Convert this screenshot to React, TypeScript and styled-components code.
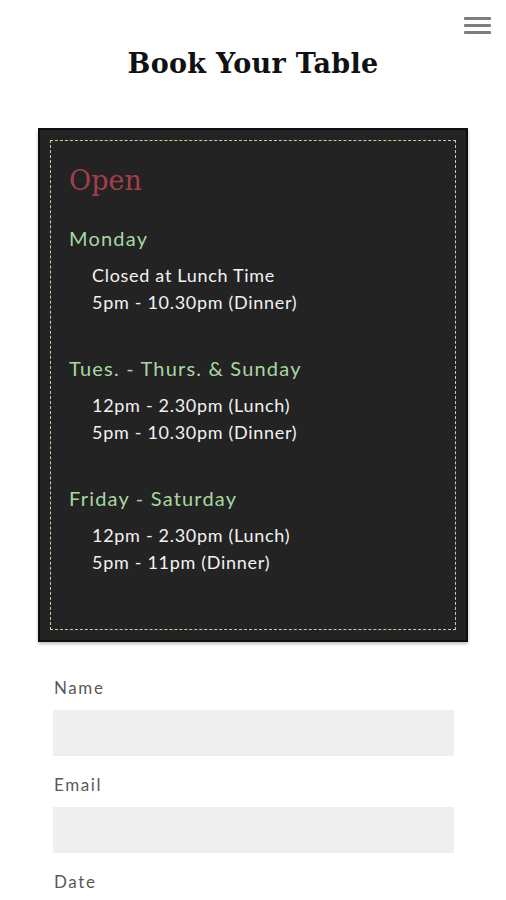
import React from "react";
import styled, { createGlobalStyle } from "styled-components";

const Global = createGlobalStyle`
  html, body { margin: 0; padding: 0; background: #ffffff; }
  body { font-family: "Lato", "Liberation Sans", sans-serif; }
  * { box-sizing: border-box; }
`;

const Page = styled.div`
  position: relative;
  width: 506px;
  min-height: 900px;
  overflow: hidden;
`;

const MenuButton = styled.button`
  position: absolute;
  top: 17px;
  right: 15px;
  width: 27px;
  padding: 0;
  border: 0;
  background: transparent;
  display: flex;
  flex-direction: column;
  gap: 4px;
  cursor: pointer;
`;

const MenuBar = styled.span`
  display: block;
  width: 27px;
  height: 3px;
  border-radius: 1px;
  background: #7d7d7d;
`;

const Title = styled.h1`
  margin: 0;
  padding-top: 46px;
  text-align: center;
  font-family: "DejaVu Serif", "Liberation Serif", serif;
  font-weight: 700;
  font-size: 27px;
  line-height: 36px;
  color: #111111;
  letter-spacing: 0.3px;
`;

const Board = styled.section`
  margin: 46px 0 0 38px;
  width: 430px;
  background: #232323;
  border: 2px solid #0e0e0e;
  padding: 10px;
  box-shadow: 0 2px 3px rgba(0, 0, 0, 0.25);
`;

const BoardInner = styled.div`
  border: 1px dashed #d2cc9c;
  padding: 24px 18px 53px 18px;
  display: flex;
  flex-direction: column;
`;

const OpenTitle = styled.h2`
  margin: 0 0 29px 0;
  font-family: "DejaVu Serif", "Liberation Serif", serif;
  font-weight: 400;
  font-size: 27px;
  line-height: 32px;
  color: #a33f4c;
`;

const Group = styled.div`
  display: flex;
  flex-direction: column;
  & + & {
    margin-top: 40px;
  }
`;

const DayHeading = styled.h3`
  margin: 0 0 12px 0;
  font-family: "Lato", sans-serif;
  font-weight: 400;
  font-size: 20px;
  line-height: 24px;
  letter-spacing: 1.2px;
  color: #a9d7a3;
`;

const HourLine = styled.p`
  margin: 0;
  padding-left: 23px;
  font-family: "Lato", sans-serif;
  font-weight: 400;
  font-size: 18px;
  line-height: 27px;
  letter-spacing: 0.7px;
  color: #f2f2f2;
`;

const Form = styled.form`
  margin: 34px 0 0 53px;
  width: 401px;
  display: flex;
  flex-direction: column;
`;

const Label = styled.label`
  display: block;
  margin: 0 0 10px 1px;
  font-family: "Lato", sans-serif;
  font-weight: 400;
  font-size: 17px;
  line-height: 24px;
  letter-spacing: 1.6px;
  color: #5a5a5a;
`;

const Input = styled.input`
  display: block;
  width: 100%;
  height: 46px;
  margin: 0 0 17px 0;
  border: 0;
  background: #efefef;
  font-family: "Lato", sans-serif;
  font-size: 16px;
  padding: 0 12px;
  outline: none;
`;

const schedule = [
  { day: "Monday", hours: ["Closed at Lunch Time", "5pm - 10.30pm (Dinner)"] },
  { day: "Tues. - Thurs. & Sunday", hours: ["12pm - 2.30pm (Lunch)", "5pm - 10.30pm (Dinner)"] },
  { day: "Friday - Saturday", hours: ["12pm - 2.30pm (Lunch)", "5pm - 11pm (Dinner)"] },
];

export default function App() {
  return (
    <>
      <Global />
      <Page>
        <MenuButton aria-label="Menu">
          <MenuBar />
          <MenuBar />
          <MenuBar />
        </MenuButton>
        <Title>Book Your Table</Title>
        <Board>
          <BoardInner>
            <OpenTitle>Open</OpenTitle>
            {schedule.map((g) => (
              <Group key={g.day}>
                <DayHeading>{g.day}</DayHeading>
                {g.hours.map((h) => (
                  <HourLine key={h}>{h}</HourLine>
                ))}
              </Group>
            ))}
          </BoardInner>
        </Board>
        <Form onSubmit={(e) => e.preventDefault()}>
          <Label htmlFor="name">Name</Label>
          <Input id="name" type="text" />
          <Label htmlFor="email">Email</Label>
          <Input id="email" type="email" />
          <Label htmlFor="date">Date</Label>
        </Form>
      </Page>
    </>
  );
}
